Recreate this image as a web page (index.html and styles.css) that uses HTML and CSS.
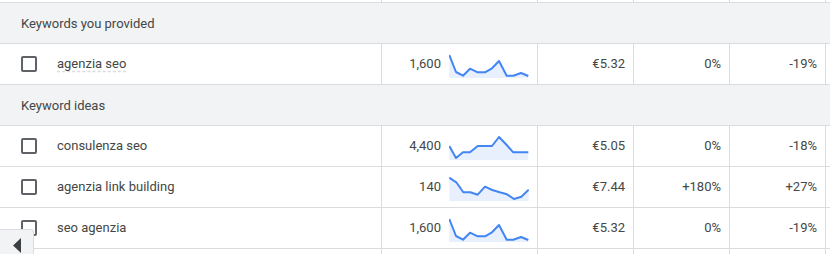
FILE: index.html
```html
<!DOCTYPE html>
<html>
<head>
<meta charset="utf-8">
<link rel="stylesheet" href="styles.css">
</head>
<body>
<div class="table">
  <div class="row stub">
    <div class="cell"></div><div class="cell"></div><div class="cell"></div><div class="cell"></div><div class="cell"></div>
  </div>
  <div class="group">Keywords you provided</div>
  <div class="row">
    <div class="cell kw"><span class="cb"></span><span class="kwtext dotted">agenzia seo</span></div>
    <div class="cell vol"><span>1,600</span>
      <svg class="spark" width="80" height="24" viewBox="0 0 80 24"><polygon class="area" points="0.3,1 7,18 14,21.7 21,14.7 28.7,18.3 36,18.3 43,14.3 50,7 57.7,21.7 64.3,21.7 72,19 79.3,22 79.3,24 0.3,24"/><polyline class="line" points="0.3,1 7,18 14,21.7 21,14.7 28.7,18.3 36,18.3 43,14.3 50,7 57.7,21.7 64.3,21.7 72,19 79.3,22"/></svg>
    </div>
    <div class="cell num">€5.32</div>
    <div class="cell num">0%</div>
    <div class="cell num">-19%</div>
  </div>
  <div class="group">Keyword ideas</div>
  <div class="row">
    <div class="cell kw"><span class="cb"></span><span class="kwtext">consulenza seo</span></div>
    <div class="cell vol"><span>4,400</span>
      <svg class="spark" width="80" height="24" viewBox="0 0 80 24"><polygon class="area" points="0.3,10 7,22 14,16.3 21,16.3 28.7,10 36,10 43,10 50,1 57.7,9 64.3,16.3 72,16.3 79.3,16.3 79.3,24 0.3,24"/><polyline class="line" points="0.3,10 7,22 14,16.3 21,16.3 28.7,10 36,10 43,10 50,1 57.7,9 64.3,16.3 72,16.3 79.3,16.3"/></svg>
    </div>
    <div class="cell num">€5.05</div>
    <div class="cell num">0%</div>
    <div class="cell num">-18%</div>
  </div>
  <div class="row">
    <div class="cell kw"><span class="cb"></span><span class="kwtext">agenzia link building</span></div>
    <div class="cell vol"><span>140</span>
      <svg class="spark" width="80" height="24" viewBox="0 0 80 24"><polygon class="area" points="0.3,0.7 7.3,5.3 14.3,15.3 21.3,15.3 28.7,17.7 36,9.7 43.3,13 50.7,15.3 58,17.3 65,22 72.3,19.7 79.7,12.7 79.7,24 0.3,24"/><polyline class="line" points="0.3,0.7 7.3,5.3 14.3,15.3 21.3,15.3 28.7,17.7 36,9.7 43.3,13 50.7,15.3 58,17.3 65,22 72.3,19.7 79.7,12.7"/></svg>
    </div>
    <div class="cell num">€7.44</div>
    <div class="cell num">+180%</div>
    <div class="cell num">+27%</div>
  </div>
  <div class="row">
    <div class="cell kw"><span class="cb"></span><span class="kwtext">seo agenzia</span></div>
    <div class="cell vol"><span>1,600</span>
      <svg class="spark" width="80" height="24" viewBox="0 0 80 24"><polygon class="area" points="0.3,1 7,18 14,21.7 21,14.7 28.7,18.3 36,18.3 43,14.3 50,7 57.7,21.7 64.3,21.7 72,19 79.3,22 79.3,24 0.3,24"/><polyline class="line" points="0.3,1 7,18 14,21.7 21,14.7 28.7,18.3 36,18.3 43,14.3 50,7 57.7,21.7 64.3,21.7 72,19 79.3,22"/></svg>
    </div>
    <div class="cell num">€5.32</div>
    <div class="cell num">0%</div>
    <div class="cell num">-19%</div>
  </div>
  <div class="row tail">
    <div class="cell"></div><div class="cell"></div><div class="cell"></div><div class="cell"></div><div class="cell"></div>
  </div>
</div>
<button class="scroll-left" aria-label="Scroll left"><svg width="8" height="15" viewBox="0 0 8 15"><polygon points="8,0 8,15 0,7.5" fill="#3c4043"/></svg></button>
</body>
</html>
```
FILE: styles.css
```css
html, body {
  margin: 0;
  padding: 0;
  background: #ffffff;
  width: 830px;
  height: 254px;
  overflow: hidden;
  font-family: Roboto, "Liberation Sans", Arial, sans-serif;
  color: #444746;
}
.table {
  display: flex;
  flex-direction: column;
}
.row {
  display: grid;
  grid-template-columns: 382px 156px 96px 96px 96px;
  height: 40px;
  border-bottom: 1px solid #dadce0;
  background: #ffffff;
  font-size: 13px;
}
.row.stub {
  height: 2px;
}
.row.tail {
  height: 5px;
  border-bottom: none;
}
.cell {
  border-right: 1px solid #dadce0;
  display: flex;
  align-items: center;
  min-width: 0;
}
.group {
  height: 40px;
  background: #f1f3f4;
  border-bottom: 1px solid #dadce0;
  display: flex;
  align-items: center;
  padding-left: 21px;
  font-size: 13px;
}
.kw {
  padding-left: 21px;
}
.cb {
  width: 12px;
  height: 12px;
  border: 2px solid #5f6368;
  border-radius: 2px;
  flex: none;
}
.kwtext {
  margin-left: 20px;
  margin-top: -1px;
}
.dotted {
  text-decoration: underline dashed #dadce0;
  text-underline-offset: 3px;
}
.vol {
  justify-content: flex-end;
  padding-right: 8px;
  gap: 8px;
}
.vol span {
  margin-top: -1px;
}
.spark {
  display: block;
  margin-top: 3px;
}
.spark .area {
  fill: #e8f0fe;
}
.spark .line {
  fill: none;
  stroke: #4285f4;
  stroke-width: 2;
  stroke-linejoin: round;
}
.num {
  justify-content: flex-end;
  padding-right: 8px;
  padding-bottom: 1px;
}
.scroll-left {
  position: absolute;
  left: 0;
  top: 229px;
  width: 34px;
  height: 30px;
  margin: 0;
  padding: 8px 0 0 13px;
  box-sizing: border-box;
  background: #f1f3f4;
  border: 1px solid #dadce0;
  border-left: none;
  border-top-right-radius: 3px;
  display: flex;
  align-items: flex-start;
  justify-content: flex-start;
}
```
